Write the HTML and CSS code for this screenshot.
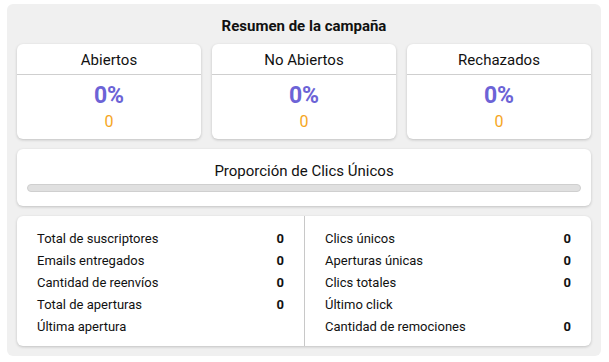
FILE: index.html
```html
<!DOCTYPE html>
<html lang="es">
<head>
    <meta charset="UTF-8">
    <meta name="viewport" content="width=device-width, initial-scale=1.0">
    <title>Resumen de la campaña</title>
    <link rel="stylesheet" href="styles.css">
</head>
<body>
    <div class="summary">
        <h2 class="summary-title">Resumen de la campaña</h2>

        <div class="stats">
            <div class="stat-card">
                <div class="stat-header">Abiertos</div>
                <div class="stat-body">
                    <div class="stat-percent">0%</div>
                    <div class="stat-count">0</div>
                </div>
            </div>
            <div class="stat-card">
                <div class="stat-header">No Abiertos</div>
                <div class="stat-body">
                    <div class="stat-percent">0%</div>
                    <div class="stat-count">0</div>
                </div>
            </div>
            <div class="stat-card">
                <div class="stat-header">Rechazados</div>
                <div class="stat-body">
                    <div class="stat-percent">0%</div>
                    <div class="stat-count">0</div>
                </div>
            </div>
        </div>

        <div class="card clicks">
            <div class="clicks-title">Proporción de Clics Únicos</div>
            <div class="progress"><div class="progress-fill" style="width: 0%"></div></div>
        </div>

        <div class="card details">
            <div class="details-col">
                <div class="row"><span>Total de suscriptores</span><b>0</b></div>
                <div class="row"><span>Emails entregados</span><b>0</b></div>
                <div class="row"><span>Cantidad de reenvíos</span><b>0</b></div>
                <div class="row"><span>Total de aperturas</span><b>0</b></div>
                <div class="row"><span>Última apertura</span><b></b></div>
            </div>
            <div class="details-col">
                <div class="row"><span>Clics únicos</span><b>0</b></div>
                <div class="row"><span>Aperturas únicas</span><b>0</b></div>
                <div class="row"><span>Clics totales</span><b>0</b></div>
                <div class="row"><span>Último click</span><b></b></div>
                <div class="row"><span>Cantidad de remociones</span><b>0</b></div>
            </div>
        </div>
    </div>
</body>
</html>
```

FILE: styles.css
```css
body {
    font-family: Roboto, "Liberation Sans", Arial, sans-serif;
    background-color: white;
    color: #111;
    margin: 0;
    padding: 0;
}

.summary {
    margin: 4px 8px 0 7px;
    padding: 10px;
    background-color: #f0f0f0;
    border-radius: 6px;
    display: flex;
    flex-direction: column;
    gap: 10px;
}

.summary-title {
    margin: 0;
    padding-top: 2px;
    height: 18px;
    font-size: 15px;
    line-height: 20px;
    font-weight: bold;
    text-align: center;
}

.stats {
    display: grid;
    grid-template-columns: repeat(3, 1fr);
    gap: 11px;
}

.stat-card,
.card {
    background-color: white;
    border-radius: 6px;
    box-shadow: 0 1px 3px rgba(0, 0, 0, 0.2);
}

.stat-header {
    height: 27px;
    padding-top: 3px;
    line-height: 27px;
    font-size: 15px;
    text-align: center;
    border-bottom: 1px solid #cfcfcf;
}

.stat-body {
    height: 64px;
    display: flex;
    flex-direction: column;
    align-items: center;
    padding-top: 7px;
    box-sizing: border-box;
}

.stat-percent {
    font-size: 23px;
    line-height: 28px;
    font-weight: bold;
    color: #6c63d6;
}

.stat-count {
    font-size: 16px;
    line-height: 20px;
    margin-top: 2px;
    color: #f6a623;
}

.clicks {
    padding: 12px 10px 14px;
}

.clicks-title {
    font-size: 15px;
    line-height: 20px;
    text-align: center;
}

.progress {
    margin-top: 3px;
    height: 8px;
    background-color: #e0e0e0;
    border: 1px solid #cfcfcf;
    border-radius: 4px;
    box-sizing: border-box;
    overflow: hidden;
}

.progress-fill {
    height: 100%;
    background-color: #6c63d6;
}

.details {
    display: grid;
    grid-template-columns: 287px 1fr;
}

.details-col {
    padding: 12px 20px 8px;
}

.details-col + .details-col {
    border-left: 1px solid #c8c8c8;
}

.row {
    display: flex;
    justify-content: space-between;
    font-size: 13px;
    line-height: 22px;
}

.row b {
    font-weight: bold;
}
```
